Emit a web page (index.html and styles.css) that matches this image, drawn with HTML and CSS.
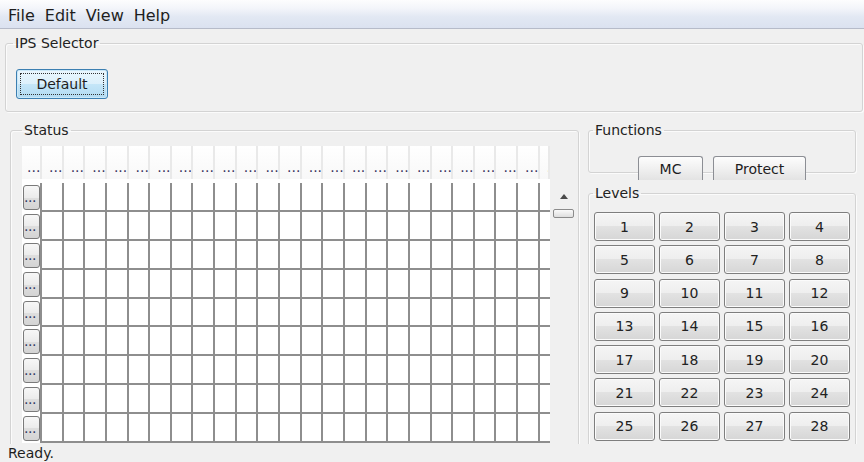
FILE: index.html
```html
<!DOCTYPE html>
<html lang="en">
<head>
  <meta charset="UTF-8">
  <title>IPS Monitor</title>
  <link rel="stylesheet" href="styles.css">
</head>
<body>

<div class="window">
  <div class="menubar">
    <span class="menu-item">File</span>
    <span class="menu-item">Edit</span>
    <span class="menu-item">View</span>
    <span class="menu-item">Help</span>
  </div>

  <div class="content">
    <fieldset class="group ips">
      <legend>IPS Selector</legend>
      <button class="btn-default"><span>Default</span></button>
    </fieldset>

    <div class="panels">
      <fieldset class="group status">
        <legend>Status</legend>
        <div class="status-body">
          <div class="table" id="table"></div>
          <div class="scrollbar">
            <div class="arrow-up"></div>
            <div class="thumb"></div>
          </div>
        </div>
      </fieldset>

      <div class="side">
        <fieldset class="group functions">
          <legend>Functions</legend>
          <div class="tabs">
            <div class="tab tab-mc">MC</div>
            <div class="tab tab-protect">Protect</div>
          </div>
        </fieldset>

        <fieldset class="group levels">
          <legend>Levels</legend>
          <div class="level-grid" id="levels"></div>
        </fieldset>
      </div>
    </div>
  </div>

  <div class="statusbar">Ready.</div>
</div>

<script>
  // status table: corner + 23 columns + a cut-off one, 9 rows
  const table = document.getElementById('table');
  const cols = 25;
  const rows = 9;

  for (let c = 0; c < cols; c++) {
    const h = document.createElement('div');
    h.className = c === 0 ? 'hcell corner' : 'hcell';
    // the last column is only partly scrolled into view
    h.textContent = c === cols - 1 ? '.' : '...';
    table.appendChild(h);
  }

  for (let r = 0; r < rows; r++) {
    const head = document.createElement('div');
    head.className = 'rhead';
    head.innerHTML = '<div class="rbtn">...</div>';
    table.appendChild(head);
    for (let c = 1; c < cols; c++) {
      const cell = document.createElement('div');
      cell.className = c === cols - 1 ? 'cell last' : 'cell';
      table.appendChild(cell);
    }
  }

  // level buttons 1..28
  const levels = document.getElementById('levels');
  for (let i = 1; i <= 28; i++) {
    const b = document.createElement('button');
    b.className = 'lbtn';
    b.textContent = i;
    levels.appendChild(b);
  }
</script>
</body>
</html>
```

FILE: styles.css
```css
* {
  box-sizing: border-box;
}
html, body {
  margin: 0;
}
body {
  background: #f0f0f0;
  font-family: "DejaVu Sans", sans-serif;
  font-size: 14px;
  color: #1e1e1e;
}
.window {
  display: flex;
  flex-direction: column;
  width: 864px;
  height: 462px;
  overflow: hidden;
}

/* menu */
.menubar {
  flex: none;
  display: flex;
  height: 29px;
  padding: 4px 0 0 3px;
  font-size: 16px;
  line-height: 24px;
  background: linear-gradient(#fdfdfe 0%, #f3f5fa 30%, #e2e8f3 60%, #dbe2f0 100%);
  border-bottom: 1px solid #b6bbc9;
}
.menu-item {
  padding: 0 5px;
}

.content {
  flex: 1;
  min-height: 0;
  overflow: hidden;
}
.statusbar {
  flex: none;
  height: 18px;
  padding: 1px 0 0 8px;
  line-height: 17px;
}

/* group boxes */
.group {
  min-width: 0;
  margin: 0;
  padding: 0;
  border: 1px solid #d3d3d3;
  border-radius: 3px;
  box-shadow: inset 1px 1px 0 #fbfbfb, 1px 1px 0 #fbfbfb;
}
.group legend {
  padding: 0 2px;
  font-size: 14px;
  line-height: 17px;
  color: #222;
}

.ips {
  margin: 6px 1px 0 5px;
  padding: 17px 10px 12px;
}
.ips legend {
  margin-left: -3px;
}
.btn-default {
  display: block;
  width: 92px;
  height: 30px;
  padding: 3px;
  border: 1px solid #3c7fb1;
  border-radius: 3px;
  background: linear-gradient(#eaf6fd, #dcf0fb 50%, #c5e6f8 50%, #b2dbf2);
  box-shadow: inset 0 0 0 1px #cbe8f8;
  font: inherit;
  color: #1e1e1e;
}
.btn-default span {
  display: block;
  height: 22px;
  line-height: 20px;
  border: 1px dotted #333;
}

.panels {
  display: flex;
  align-items: flex-start;
  gap: 9px;
  margin-top: 10px;
  padding-left: 10px;
}

/* status table */
.status {
  flex: none;
  width: 569px;
  padding: 7px 4px 6px 11px;
}
.status-body {
  display: flex;
  gap: 3px;
}
.table {
  display: grid;
  grid-template-columns: 20px repeat(23, 21.65px) 10px;
  grid-template-rows: 37px repeat(9, 28.9px);
  width: 528px;
  background: #fff;
}
.hcell {
  height: 33px;
  padding: 0 0 5px 7px;
  display: flex;
  align-items: flex-end;
  overflow: hidden;
  white-space: nowrap;
  line-height: 14px;
  color: #3a3560;
  background: linear-gradient(#fff, #f8f8f8);
  border-right: 2px solid #e9e9e9;
}
.hcell.corner {
  padding-left: 5px;
}
.cell {
  border-right: 2px solid #8e8e8e;
  border-bottom: 2px solid #8e8e8e;
}
.cell.last {
  border-right: 0;
}
.rhead {
  padding: 2px 0 0 1px;
  border-right: 2px solid #8e8e8e;
}
.rbtn {
  width: 17px;
  height: 25px;
  padding-top: 3px;
  overflow: hidden;
  white-space: nowrap;
  line-height: 17px;
  letter-spacing: -0.5px;
  color: #303a64;
  border: 1px solid #7a7a7a;
  border-radius: 3px;
  background: linear-gradient(#f7f7f7, #ebebeb 50%, #dedede 50%, #d4d4d4);
}

.scrollbar {
  flex: none;
  width: 21px;
  padding-top: 48px;
  display: flex;
  flex-direction: column;
  align-items: center;
}
.arrow-up {
  width: 0;
  height: 0;
  border-left: 4px solid transparent;
  border-right: 4px solid transparent;
  border-bottom: 5px solid #4a4a4a;
}
.thumb {
  margin-top: 10px;
  width: 21px;
  height: 9px;
  border: 1px solid #8b8b8b;
  border-radius: 2px;
  background: linear-gradient(#fafafa, #dedede);
}

/* right column */
.side {
  flex: none;
  width: 268px;
  display: flex;
  flex-direction: column;
}
.functions {
  padding: 0 6px;
}
.functions legend {
  margin-left: -2px;
}
.tabs {
  display: flex;
  justify-content: center;
  gap: 10px;
  padding-top: 17px;
  margin-bottom: -8px;
}
.tab {
  height: 24px;
  padding-top: 2px;
  line-height: 21px;
  text-align: center;
  border: 1px solid #8c8e94;
  border-bottom: 0;
  border-radius: 3px 3px 0 0;
  background: linear-gradient(#fdfdfd, #efefef 55%, #e3e3e3);
}
.tab-mc {
  width: 65px;
}
.tab-protect {
  width: 93px;
}

.levels {
  margin-top: 12px;
  padding: 10px 5px 12px;
}
.levels legend {
  margin-left: -1px;
}
.level-grid {
  display: grid;
  grid-template-columns: repeat(4, 61px);
  grid-auto-rows: 29px;
  column-gap: 4px;
  row-gap: 4.3px;
}
.lbtn {
  padding: 0;
  font: inherit;
  color: #222;
  border: 1px solid #7e7e7e;
  border-radius: 3px;
  background: linear-gradient(#f5f5f5, #eeeeee 50%, #e2e2e2 50%, #d6d6d6);
  box-shadow: inset 0 0 0 1px #fbfbfb;
}
```
